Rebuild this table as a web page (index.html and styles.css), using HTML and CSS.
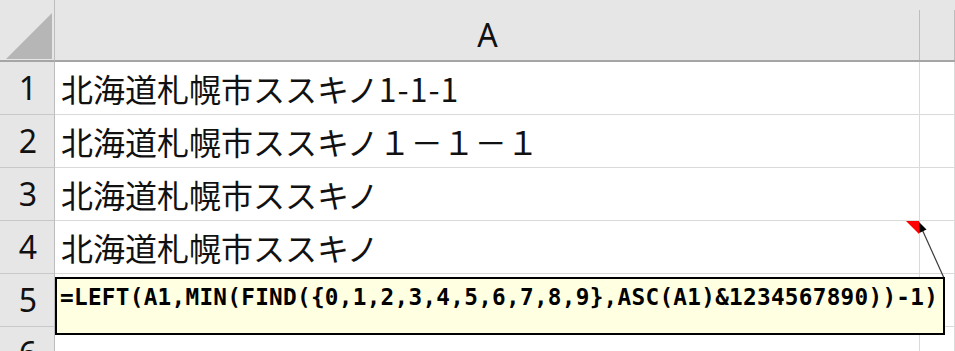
FILE: index.html
```html
<!DOCTYPE html>
<html lang="ja">
<head>
    <meta charset="UTF-8">
    <title>Sheet1</title>
    <link rel="stylesheet" href="styles.css">
</head>
<body>
    <div class="sheet">
        <!-- cabecera de columnas -->
        <div class="corner">
            <svg width="55" height="62" viewBox="0 0 55 62"><polygon points="52,13 52,59 6,59" fill="#b6b6b6"/></svg>
        </div>
        <div class="col-head">A</div>
        <div class="col-head"></div>

        <div class="row-head">1</div>
        <div class="cell">北海道札幌市ススキノ<span class="num">1-1-1</span></div>
        <div class="cell"></div>

        <div class="row-head">2</div>
        <div class="cell">北海道札幌市ススキノ１－１－１</div>
        <div class="cell"></div>

        <div class="row-head">3</div>
        <div class="cell">北海道札幌市ススキノ</div>
        <div class="cell"></div>

        <div class="row-head">4</div>
        <div class="cell">北海道札幌市ススキノ</div>
        <div class="cell"></div>

        <div class="row-head">5</div>
        <div class="cell"></div>
        <div class="cell"></div>

        <div class="row-head">6</div>
        <div class="cell"></div>
        <div class="cell"></div>
    </div>

    <!-- indicador de comentario en A4 y su flecha -->
    <svg class="pointer" width="955" height="351" viewBox="0 0 955 351">
        <polygon points="906,221 919,221 919,234" fill="#ff0000"/>
        <line x1="944" y1="278" x2="921" y2="227" stroke="#3a3a3a" stroke-width="1.2"/>
        <polygon points="919,222 926.5,229.5 919.3,233" fill="#000"/>
    </svg>

    <div class="comment">=LEFT(A1,MIN(FIND({0,1,2,3,4,5,6,7,8,9},ASC(A1)&amp;1234567890))-1)</div>
</body>
</html>
```

FILE: styles.css
```css
body {
    margin: 0;
    background: #fff;
    overflow: hidden;
    font-family: "Noto Sans CJK JP", "Noto Sans", sans-serif;
    color: #111;
}

.sheet {
    display: grid;
    grid-template-columns: 55px 865px 1fr;
    grid-template-rows: 62px repeat(6, 53px);
    height: 351px;
    overflow: hidden;
}

.sheet > div {
    box-sizing: border-box;
}

/* cabeceras */
.corner,
.col-head {
    background: #e6e6e6;
    border-bottom: 2px solid #a5a5a5;
    position: relative;
}

.corner {
    border-right: 1px solid #bdbdbd;
}

.corner svg {
    display: block;
}

.col-head {
    font-family: "Noto Sans", sans-serif;
    font-size: 32px;
    text-align: center;
    line-height: 62px;
    padding-top: 4px;
}

.col-head::after {
    content: "";
    position: absolute;
    right: 0;
    top: 10px;
    bottom: 0;
    width: 1px;
    background: #bdbdbd;
}

.row-head {
    background: #e6e6e6;
    border-right: 1px solid #bdbdbd;
    border-bottom: 1px solid #c8c8c8;
    font-family: "Noto Sans", sans-serif;
    font-size: 32px;
    text-align: center;
    line-height: 52px;
    padding-left: 2px;
}

/* celdas */
.cell {
    border-right: 1px solid #dadada;
    border-bottom: 1px solid #dadada;
    font-size: 32px;
    line-height: 52px;
    padding-left: 6px;
    white-space: nowrap;
}

.num {
    letter-spacing: 1px;
}

.pointer {
    position: absolute;
    top: 0;
    left: 0;
    pointer-events: none;
}

/* cuadro del comentario */
.comment {
    position: absolute;
    left: 55px;
    top: 277px;
    width: 890px;
    height: 58px;
    box-sizing: border-box;
    border: 2px solid #000;
    background: #ffffe1;
    font-family: "DejaVu Sans Mono", monospace;
    font-weight: bold;
    font-size: 22.7px;
    letter-spacing: 0.28px;
    line-height: 28px;
    padding: 4px 0 0 3px;
    white-space: nowrap;
    color: #000;
}
```
